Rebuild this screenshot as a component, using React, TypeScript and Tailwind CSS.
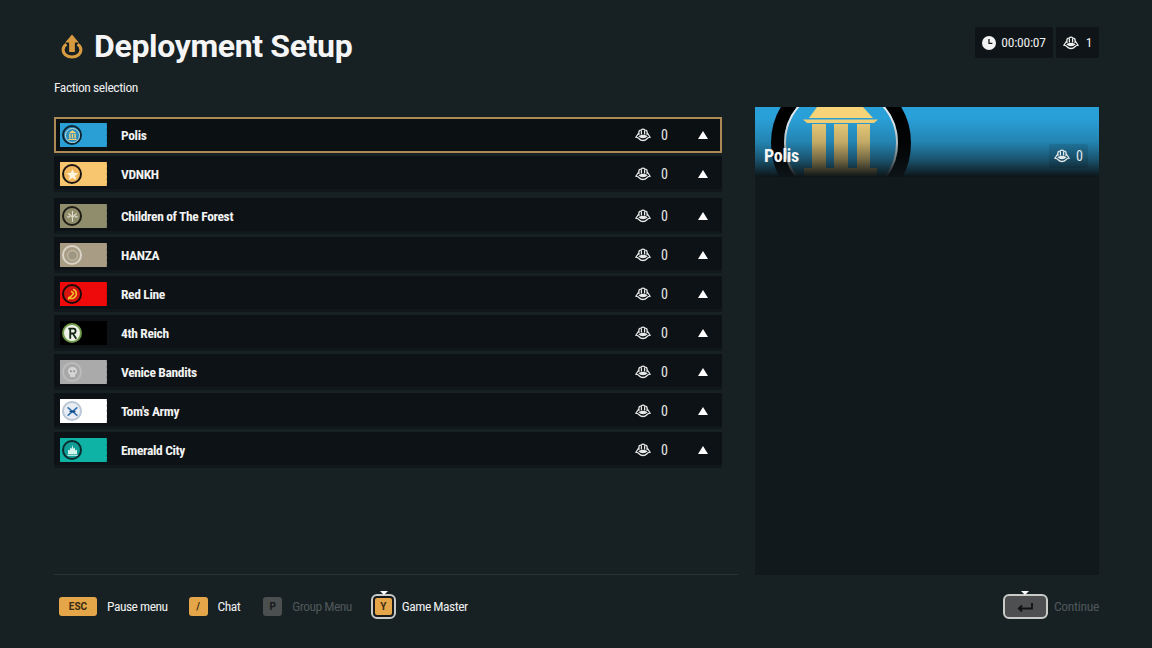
const font = { fontFamily: 'Roboto, "Liberation Sans", sans-serif' };

type Faction = { name: string; flag: string; ring: string; edge: string; emblem: string; gapTop: string };

const factions: Faction[] = [
  { name: 'Polis', flag: 'bg-[#2a9fd6]', ring: 'bg-[#2a8fc0]', edge: 'border-[#0f2430]', emblem: 'polis', gapTop: '' },
  { name: 'VDNKH', flag: 'bg-[#f8c66e]', ring: 'bg-[#f2b95f]', edge: 'border-[#1a1712]', emblem: 'star', gapTop: 'mt-[3px]' },
  { name: 'Children of The Forest', flag: 'bg-[#8f8d6c]', ring: 'bg-[#8f8d6c]', edge: 'border-[#1c1c16]', emblem: 'forest', gapTop: 'mt-[6px]' },
  { name: 'HANZA', flag: 'bg-[#a89c85]', ring: 'bg-[#a89c85]', edge: 'border-[#d9d4c6]', emblem: 'hanza', gapTop: 'mt-[3px]' },
  { name: 'Red Line', flag: 'bg-[#ee0a0a]', ring: 'bg-[#d8140f]', edge: 'border-[#1c0b0b]', emblem: 'red', gapTop: 'mt-[3px]' },
  { name: '4th Reich', flag: 'bg-black', ring: 'bg-[#eef2e6]', edge: 'border-[#6f9a4a]', emblem: 'reich', gapTop: 'mt-[3px]' },
  { name: 'Venice Bandits', flag: 'bg-[#aaaaaa]', ring: 'bg-[#a8a8a8]', edge: 'border-[#bcbcbc]', emblem: 'skull', gapTop: 'mt-[3px]' },
  { name: "Tom's Army", flag: 'bg-white', ring: 'bg-[#e9edf3]', edge: 'border-[#b9c6d6]', emblem: 'tom', gapTop: 'mt-[3px]' },
  { name: 'Emerald City', flag: 'bg-[#0fb3a5]', ring: 'bg-[#0f9e96]', edge: 'border-[#0b2a2c]', emblem: 'emerald', gapTop: 'mt-[3px]' },
];

function PlayersIcon({ className }: { className?: string }) {
  return (
    <svg viewBox="0 0 16 14" className={className} fill="none" stroke="currentColor" strokeWidth="1.3" aria-hidden="true">
      <path d="M3.9 7 V4 A2 2 0 0 1 6.2 2.1 A2.2 2.2 0 0 1 9.8 2.1 A2 2 0 0 1 12.1 4 V7" />
      <path d="M6.4 2.4 V6.6 M9.6 2.4 V6.6" />
      <path d="M3.7 5 L0.9 9.2 C2.4 9.5 3.4 9.9 4.4 11 C6 13 10 13 11.6 11 C12.6 9.9 13.6 9.5 15.1 9.2 L12.3 5" />
      <path d="M4.4 8.4 C6.4 7.2 9.6 7.2 11.6 8.4 C10 10 6 10 4.4 8.4 Z" fill="currentColor" />
    </svg>
  );
}

function Emblem({ kind }: { kind: string }) {
  if (kind === 'polis')
    return (
      <svg viewBox="0 0 20 20" className="h-full w-full">
        <circle cx="10" cy="10" r="9.4" fill="none" stroke="#cfe3d8" strokeWidth="1.2" />
        <path d="M10 3 L15.5 7 H4.5 Z" fill="#f3d27a" />
        <path d="M5.5 8 H7.5 V14 H5.5 Z M9 8 H11 V14 H9 Z M12.5 8 H14.5 V14 H12.5 Z M4.5 14.5 H15.5 V16 H4.5 Z" fill="#f0cf78" />
      </svg>
    );
  if (kind === 'star')
    return (
      <svg viewBox="0 0 20 20" className="h-full w-full">
        <path d="M10 2.5 L12.2 7.8 L17.8 8.2 L13.5 11.8 L15 17.2 L10 14.2 L5 17.2 L6.5 11.8 L2.2 8.2 L7.8 7.8 Z" fill="#fff4dc" />
      </svg>
    );
  if (kind === 'forest')
    return (
      <svg viewBox="0 0 20 20" className="h-full w-full" fill="none" stroke="#e0decb" strokeWidth="1.5">
        <path d="M10 17 V8 M10 11 L4.5 6 M10 11 L15.5 6 M10 8 V2.5 M3 10.5 H7 M13 10.5 H17" />
      </svg>
    );
  if (kind === 'hanza')
    return (
      <svg viewBox="0 0 20 20" className="h-full w-full" fill="none">
        <circle cx="10" cy="10" r="6.5" fill="#a09780" stroke="#cfcabb" strokeWidth="1.2" />
      </svg>
    );
  if (kind === 'red')
    return (
      <svg viewBox="0 0 20 20" className="h-full w-full" fill="none" stroke="#f4c430" strokeWidth="2">
        <path d="M11 3 C16.5 5.5 16.5 12.5 11 15 C8 16 6 15 4.8 13" />
        <path d="M4 16.5 L11.5 9 M8.2 5.5 L12 9" />
      </svg>
    );
  if (kind === 'reich')
    return (
      <svg viewBox="0 0 20 20" className="h-full w-full" fill="none" stroke="#0f2414" strokeWidth="2.4">
        <path d="M7 3 V17 M4.5 3.5 H11.5 C15 3.5 15 10 11.5 10 H7 M10.5 10 L15 17" />
      </svg>
    );
  if (kind === 'skull')
    return (
      <svg viewBox="0 0 20 20" className="h-full w-full">
        <path d="M10 2.5 C6 2.5 4 5.2 4 8.2 C4 10.4 5 12 6.6 12.8 V16 H13.4 V12.8 C15 12 16 10.4 16 8.2 C16 5.2 14 2.5 10 2.5 Z" fill="#d4d4d4" />
        <circle cx="7.8" cy="8.4" r="1.4" fill="#8f8f8f" />
        <circle cx="12.2" cy="8.4" r="1.4" fill="#8f8f8f" />
      </svg>
    );
  if (kind === 'tom')
    return (
      <svg viewBox="0 0 20 20" className="h-full w-full" fill="none" stroke="#2f6fb0" strokeWidth="2">
        <path d="M3.5 4.5 L16.5 15.5 M16.5 4.5 L3.5 15.5" />
        <path d="M6 10 H14" stroke="#14487c" />
      </svg>
    );
  return (
    <svg viewBox="0 0 20 20" className="h-full w-full">
      <path d="M10 2.5 L11.2 7.5 L13 6 L13.6 10 L16 9 V15 H4 V9 L6.4 10 L7 6 L8.8 7.5 Z" fill="#d6f4ee" />
      <path d="M3 16.5 H17" stroke="#d6f4ee" strokeWidth="1.2" />
    </svg>
  );
}

function Flag({ faction }: { faction: Faction }) {
  return (
    <div className={`relative flex h-6 w-[47px] shrink-0 items-center pl-[2px] ${faction.flag}`}>
      <div className={`flex h-[20px] w-[20px] items-center justify-center rounded-full border-2 ${faction.edge} ${faction.ring}`}>
        <div className="h-[15px] w-[15px]">
          <Emblem kind={faction.emblem} />
        </div>
      </div>
      <div className="absolute inset-y-0 right-0 border-r border-dashed border-black/15" />
    </div>
  );
}

function FactionRow({ faction, selected }: { faction: Faction; selected: boolean }) {
  return (
    <div
      className={`flex h-9 items-center ${faction.gapTop} ${
        selected
          ? 'border-2 border-[#ad8a55] bg-[#0b1013] pl-[4px]'
          : 'bg-[#0c1215] pl-[6px] [box-shadow:inset_0_-3px_0_#11181b]'
      }`}
    >
      <Flag faction={faction} />
      <span className="ml-[14px] flex-1 text-[13.5px] font-bold tracking-[-0.35px] text-[#f2f2f2] [font-stretch:75%]">{faction.name}</span>
      <PlayersIcon className="h-[14px] w-[16px] text-[#e8e8e8]" />
      <span className="ml-[10px] w-[6px] text-[14px] text-[#e8e8e8] [font-stretch:75%]">0</span>
      <span className={`ml-[31px] h-0 w-0 border-x-[5px] border-b-[8px] border-x-transparent border-b-white ${selected ? 'mr-[12px]' : 'mr-[14px]'}`} />
    </div>
  );
}

function KeyHint({
  keyLabel,
  label,
  disabled,
  wide,
}: {
  keyLabel: string;
  label: string;
  disabled?: boolean;
  wide?: boolean;
}) {
  return (
    <div className="flex items-center">
      <span
        className={`flex h-[19px] items-center justify-center rounded-[3px] text-[10px] font-bold ${wide ? 'w-[38px]' : 'w-[19px]'} ${
          disabled ? 'bg-[#4c4f50] text-[#17191a]' : 'bg-[#e4a648] text-[#3a2a12]'
        }`}
      >
        {keyLabel}
      </span>
      <span className={`ml-[10px] text-[13.5px] tracking-[-0.5px] [font-stretch:75%] ${disabled ? 'text-[#4f5658]' : 'text-[#eeeeee]'}`}>
        {label}
      </span>
    </div>
  );
}

export default function App() {
  return (
    <main style={font} className="flex h-[648px] w-[1152px] flex-col overflow-hidden bg-[#172124] pl-[54px] pr-[53px] text-white">
      <header className="flex h-[72px] shrink-0 items-start justify-between pt-[27px]">
        <div className="flex items-center pl-[7px]">
          <svg viewBox="0 0 26 30" className="mt-[-2px] h-[26px] w-[22px]" fill="none" aria-hidden="true">
            <path d="M6.5 13 C4 14.5 2.5 17 2.5 19.5 C2.5 24.5 7 28 13 28 C19 28 23.5 24.5 23.5 19.5 C23.5 17 22 14.5 19.5 13" stroke="#d99b3f" strokeWidth="3.6" />
            <path d="M13 1.5 L21 11 H16.4 V22 H9.6 V11 H5 Z" fill="#d99b3f" />
          </svg>
          <h1 className="ml-[11px] mt-[-1px] text-[32px] font-bold leading-[40px] tracking-[-0.35px] text-[#f5f5f5]">Deployment Setup</h1>
        </div>
        <div className="flex gap-[3px]">
          <div className="flex h-[31px] w-[78px] items-center justify-center rounded-[2px] bg-[#0e1417]">
            <svg viewBox="0 0 14 14" className="h-[14px] w-[14px]" aria-hidden="true">
              <circle cx="7" cy="7" r="7" fill="#f2f2f2" />
              <path d="M7 3 V7.4 H10.4" stroke="#0e1417" strokeWidth="1.3" fill="none" />
            </svg>
            <span className="ml-[5px] text-[13.5px] tracking-[-0.25px] text-[#eeeeee] [font-stretch:75%]">00:00:07</span>
          </div>
          <div className="flex h-[31px] w-[43px] items-center justify-center rounded-[2px] bg-[#0e1417]">
            <PlayersIcon className="h-[14px] w-[16px] text-[#eeeeee]" />
            <span className="ml-[7px] text-[13.5px] text-[#eeeeee] [font-stretch:75%]">1</span>
          </div>
        </div>
      </header>

      <p className="h-[35px] shrink-0 pt-[6px] text-[13.5px] leading-[18px] tracking-[-0.42px] text-[#eeeeee] [font-stretch:75%]">Faction selection</p>

      <div className="flex min-h-0 flex-1 gap-[17px]">
        <section className="flex w-[684px] shrink-0 flex-col border-b border-b-[#2a3236]">
          <div className="w-[668px] pt-[10px]">
            {factions.map((faction, index) => (
              <FactionRow key={faction.name} faction={faction} selected={index === 0} />
            ))}
          </div>
        </section>

        <aside className="flex w-[344px] flex-col bg-[#12191c]">
          <div className="relative flex h-[70px] shrink-0 items-end justify-between overflow-hidden bg-[#2aa0d8] pb-[12px] pl-[9px] pr-[16px]">
            <div className="absolute left-[16px] top-[-34px] flex h-[140px] w-[140px] items-center justify-center rounded-full border-[13px] border-black">
              <div className="h-[114px] w-[114px] rounded-full border-2 border-[#e4e8ea]" />
            </div>
            <svg viewBox="0 0 76 70" className="absolute left-[48px] top-0 h-[70px] w-[76px]" aria-hidden="true">
              <path d="M14 0 H60 L70 11 H6 Z" fill="#f6d477" />
              <path d="M0 12.5 H75 L71 16 H4 Z" fill="#f6d477" />
              <path d="M9 17 H23 V61 H9 Z M31 17 H45 V61 H31 Z M54 17 H67 V61 H54 Z" fill="#f0d07a" />
              <path d="M1 61 H74 V69 H1 Z" fill="#f0d07a" />
            </svg>
            <div className="absolute inset-0 bg-[linear-gradient(to_bottom,rgba(13,20,23,0)_15%,rgba(13,20,23,0.2)_50%,rgba(13,20,23,0.55)_75%,rgba(13,20,23,1)_100%)]" />
            <span className="relative text-[18px] font-bold leading-[18px] tracking-[-0.3px] text-[#f5f5f5] [font-stretch:75%]">Polis</span>
            <div className="relative flex items-center text-[#e4e8ea]">
              <div className="absolute -inset-x-[5px] -inset-y-[3px] rounded-[2px] bg-black/10" />
              <PlayersIcon className="relative h-[14px] w-[16px]" />
              <span className="relative ml-[6px] text-[14px] leading-[18px] [font-stretch:75%]">0</span>
            </div>
          </div>
        </aside>
      </div>

      <footer className="flex h-[73px] shrink-0 items-center justify-between pb-[10px]">
        <div className="flex items-center pl-[5px]">
          <KeyHint keyLabel="ESC" label="Pause menu" wide />
          <div className="ml-[21px]">
            <KeyHint keyLabel="/" label="Chat" />
          </div>
          <div className="ml-[23px]">
            <KeyHint keyLabel="P" label="Group Menu" disabled />
          </div>
          <div className="relative ml-[19px] flex items-center">
            <span className="flex h-[25px] w-[25px] items-center justify-center rounded-[6px] border-2 border-[#c9cbc9] bg-[#17191a]">
              <span className="flex h-[17px] w-[17px] items-center justify-center rounded-[2px] bg-[#e4a648] text-[10px] font-bold text-[#3a2a12]">Y</span>
            </span>
            <span className="absolute left-[9px] top-[-3px] h-0 w-0 border-x-[4px] border-t-[4px] border-x-transparent border-t-white" />
            <span className="ml-[6px] text-[13.5px] tracking-[-0.5px] text-[#eeeeee] [font-stretch:75%]">Game Master</span>
          </div>
        </div>
        <div className="flex items-center">
          <div className="relative">
            <span className="flex h-[25px] w-[45px] items-center justify-center rounded-[6px] border-2 border-[#c9cbc9] bg-[#4e4f50]">
              <svg viewBox="0 0 16 10" className="h-[10px] w-[16px]" fill="none" stroke="#101214" strokeWidth="1.8" aria-hidden="true">
                <path d="M15 1 V6.5 H2 M5 3.5 L1.8 6.5 L5 9.5" />
              </svg>
            </span>
            <span className="absolute left-[18px] top-[-3px] h-0 w-0 border-x-[4px] border-t-[4px] border-x-transparent border-t-white" />
          </div>
          <span className="ml-[6px] text-[13.5px] tracking-[-0.3px] text-[#4f5658] [font-stretch:75%]">Continue</span>
        </div>
      </footer>
    </main>
  );
}
